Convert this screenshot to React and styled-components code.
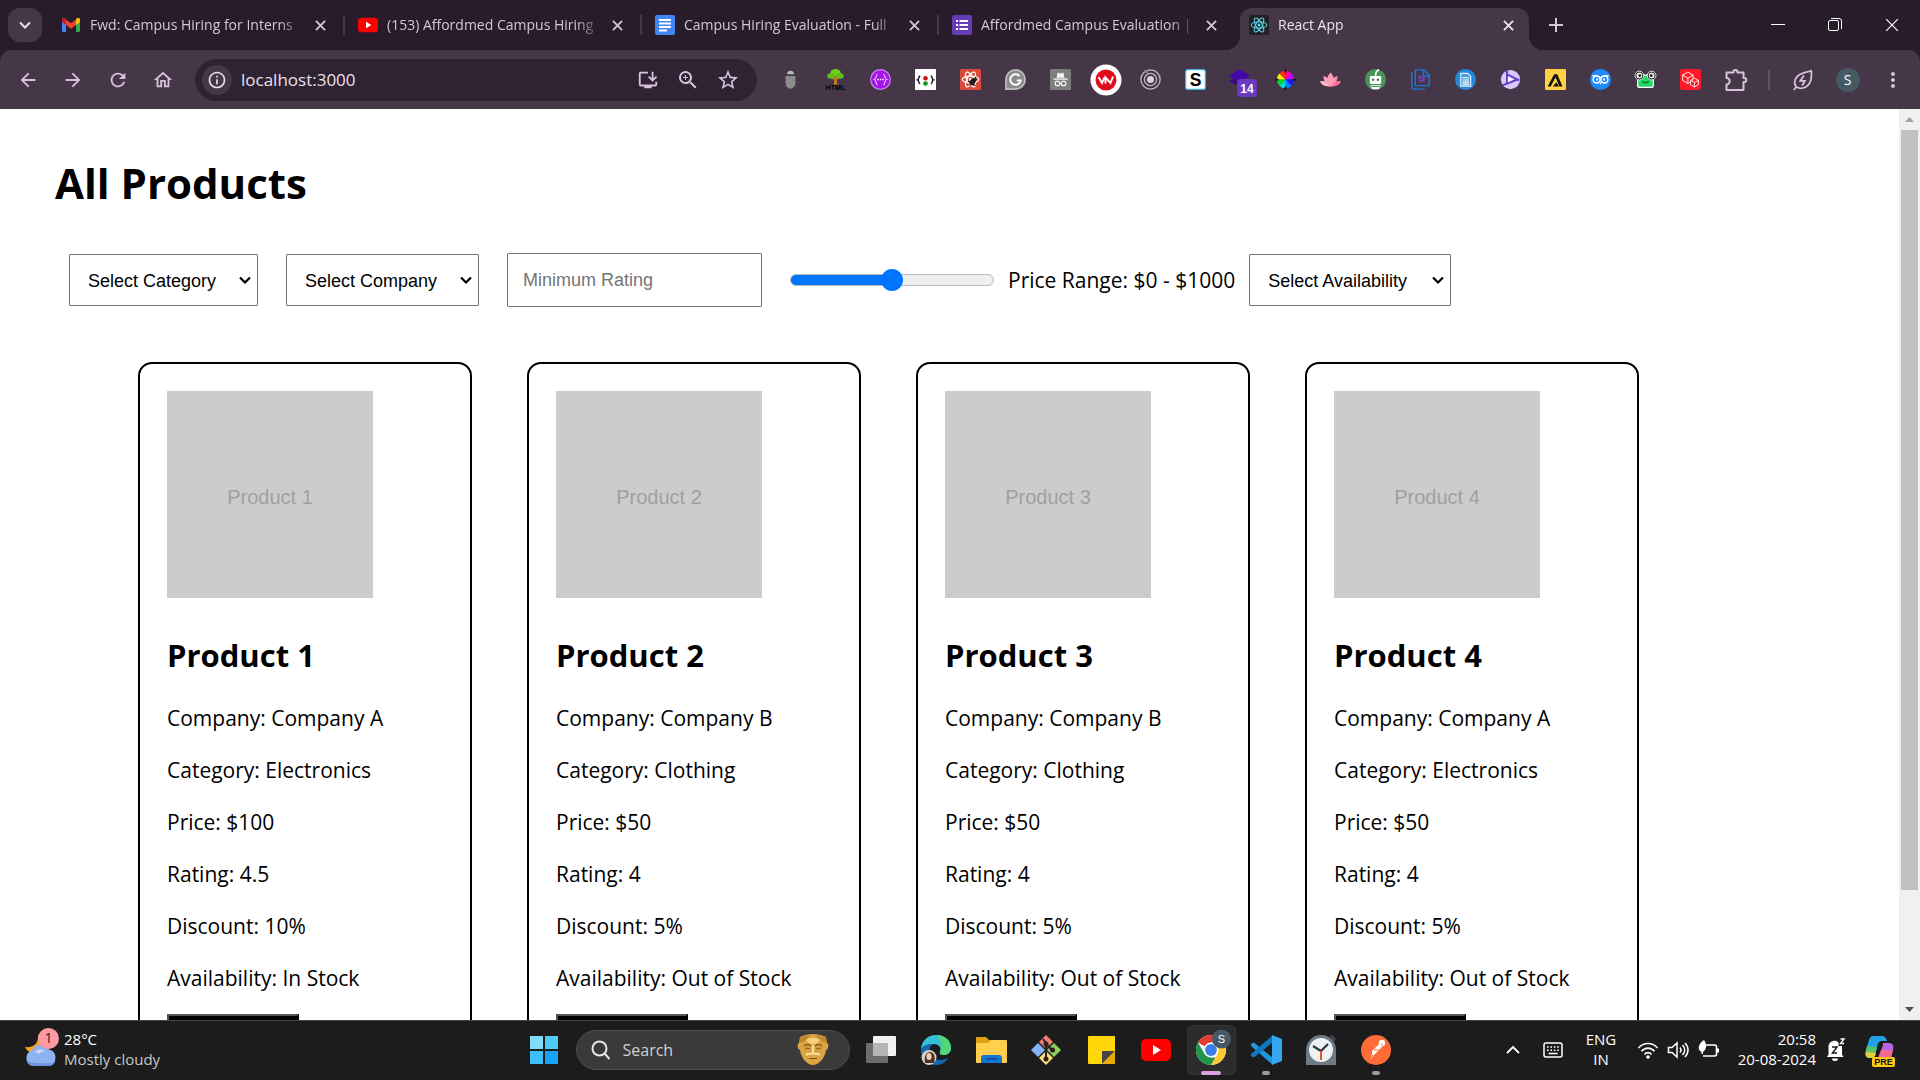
import React, { useState } from "react";
import styled, { createGlobalStyle, css } from "styled-components";
import {
  MdArrowBack,
  MdArrowForward,
  MdRefresh,
  MdOutlineHome,
  MdInfoOutline,
  MdInstallDesktop,
  MdZoomIn,
  MdStarBorder,
  MdMoreVert,
} from "react-icons/md";

const UI_FONT = `"Open Sans", "Noto Sans", sans-serif`;
const FORM_FONT = `"Liberation Sans", Arial, sans-serif`;

const GlobalStyle = createGlobalStyle`
  * { box-sizing: border-box; }
  body { margin: 0; font-family: ${UI_FONT}; background: #fff; color: #000; }
  button, input, select { font: inherit; }
  svg { display: block; flex: none; }
  h1, h2, p { margin: 0; }
`;

/* ---------- window shell ---------- */

const Desktop = styled.div`
  height: 100vh;
  display: flex;
  flex-direction: column;
  overflow: hidden;
`;

const PlainButton = styled.button`
  display: flex;
  align-items: center;
  justify-content: center;
  padding: 0;
  border: 0;
  background: none;
  color: inherit;
`;

/* ---------- tab strip ---------- */

const TabStrip = styled.header`
  display: flex;
  align-items: stretch;
  height: 50px;
  flex: none;
  background: #281c2b;
  color: #d9c3dc;
`;

const TabSearch = styled(PlainButton)`
  width: 34px;
  height: 34px;
  margin: 8px 6px 8px 8px;
  border-radius: 12px;
  background: #453748;
  color: #eadcec;
`;

const Tab = styled.div`
  flex: 0 1 297px;
  min-width: 0;
  padding: 8px 4px 0;
  position: relative;
  ${(p) =>
    p.$divided &&
    css`
      &::after {
        content: "";
        position: absolute;
        right: 0;
        top: 15px;
        width: 2px;
        height: 20px;
        background: #453748;
      }
    `}
`;

const TabBody = styled.div`
  display: flex;
  align-items: center;
  height: 42px;
  padding: 0 15px 8px 9px;
  border-radius: 12px 12px 0 0;
  position: relative;
  ${(p) =>
    p.$active &&
    css`
      background: #453748;
      color: #f0e2f2;
      &::before,
      &::after {
        content: "";
        position: absolute;
        bottom: 0;
        width: 14px;
        height: 14px;
      }
      &::before {
        left: -14px;
        background: radial-gradient(circle at 0 0, transparent 14px, #453748 14px);
      }
      &::after {
        right: -14px;
        background: radial-gradient(circle at 100% 0, transparent 14px, #453748 14px);
      }
    `}
`;

const TabTitle = styled.span`
  flex: 1;
  min-width: 0;
  margin: 0 15px 0 9px;
  font-size: 14px;
  line-height: 20px;
  white-space: nowrap;
  overflow: hidden;
  mask-image: linear-gradient(to right, #000 90%, rgba(0, 0, 0, 0.2));
`;

const NewTab = styled(PlainButton)`
  width: 46px;
`;

const WindowControls = styled.div`
  display: flex;
  margin-left: auto;
  color: #fff;
`;

const WindowButton = styled(PlainButton)`
  width: 57px;
`;

/* ---------- toolbar ---------- */

const ToolbarBack = styled.div`
  flex: none;
  background: #281c2b;
`;

const Toolbar = styled.nav`
  display: flex;
  align-items: center;
  height: 59px;
  padding: 0 5px;
  border-radius: 12px 12px 0 0;
  background: #453748;
  color: #d9c3dc;
`;

const Slot = styled(PlainButton)`
  width: 45px;
  height: 45px;
  flex: none;
`;

const Omnibox = styled.div`
  flex: 1;
  min-width: 0;
  display: flex;
  align-items: center;
  height: 42px;
  margin: 0 11px 0 10px;
  padding: 0 9px 0 7px;
  border-radius: 21px;
  background: #2f2233;
`;

const SiteInfo = styled(PlainButton)`
  width: 30px;
  height: 30px;
  border-radius: 50%;
  background: #453748;
  color: #eadcec;
`;

const Address = styled.input`
  flex: 1;
  min-width: 0;
  padding: 0 0 0 9px;
  border: 0;
  outline: 0;
  background: none;
  color: #ebe0ec;
  font-size: 17px;
  line-height: 24px;
`;

const OmniAction = styled(PlainButton)`
  width: 40px;
`;

const Extensions = styled.div`
  display: flex;
  flex: none;
`;

const ToolbarRule = styled.span`
  width: 2px;
  height: 20px;
  margin: 0 10px;
  background: #65506a;
`;

const Avatar = styled.span`
  display: grid;
  place-items: center;
  width: 24px;
  height: 24px;
  border-radius: 50%;
  background: #455a64;
  color: #fff;
  font-size: 14px;
`;

/* ---------- page ---------- */

const Viewport = styled.div`
  flex: 1;
  min-height: 0;
  display: flex;
  background: #fff;
`;

const Page = styled.main`
  flex: 1;
  min-width: 0;
  overflow: hidden;
  padding: 44px 55px 0;
  font-size: 21px;
`;

const PageTitle = styled.h1`
  font-size: 42px;
  line-height: 60px;
  font-weight: 700;
`;

const Filters = styled.form`
  display: flex;
  align-items: center;
  margin-top: 40px;
  padding: 0 14px;
`;

const SelectBox = styled.div`
  display: grid;
  align-items: center;
  flex: none;
  margin-right: ${(p) => (p.$last ? 0 : "28px")};
  & > * {
    grid-area: 1 / 1;
  }
  & > svg {
    justify-self: end;
    margin-right: 6px;
    pointer-events: none;
  }
`;

const Select = styled.select`
  appearance: none;
  width: ${(p) => p.$width}px;
  height: 52px;
  padding: 1px 18px 0;
  border: 1px solid #767676;
  border-radius: 1px;
  background: #fff;
  color: #000;
  font-family: ${FORM_FONT};
  font-size: 18px;
`;

const RatingInput = styled.input`
  width: 255px;
  height: 54px;
  padding: 0 15px;
  border: 1px solid #767676;
  border-radius: 1px;
  font-family: ${FORM_FONT};
  font-size: 18px;
  &::placeholder {
    color: #757575;
  }
`;

const PriceRange = styled.input`
  appearance: none;
  width: 204px;
  height: 22px;
  margin: 0 14px 0 28px;
  background: none;
  &::-webkit-slider-runnable-track {
    height: 12px;
    border: 1px solid #b9b9b9;
    border-radius: 6px;
    background: linear-gradient(to right, #0075ff 50%, #efefef 50%);
  }
  &::-webkit-slider-thumb {
    appearance: none;
    width: 22px;
    height: 22px;
    margin-top: -6px;
    border-radius: 50%;
    background: #0075ff;
  }
`;

const PriceLabel = styled.label`
  flex: none;
  margin-right: 14px;
  line-height: 30px;
`;

const ProductList = styled.section`
  display: flex;
  flex-wrap: wrap;
  gap: 55px;
  margin-top: 55px;
  padding-left: 83px;
`;

const Card = styled.article`
  width: 334px;
  padding: 27px;
  border: 2px solid #000;
  border-radius: 14px;
`;

const Picture = styled.div`
  display: grid;
  place-items: center;
  width: 206px;
  height: 207px;
  padding-top: 6px;
  background: #ccc;
  color: #a0a0a0;
  font-family: ${FORM_FONT};
  font-size: 20px;
`;

const CardTitle = styled.h2`
  margin: 35px 0 26px;
  font-size: 31px;
  line-height: 44px;
  font-weight: 700;
`;

const Fact = styled.p`
  line-height: 30px;
  margin-bottom: 22px;
`;

const CartButton = styled.button`
  width: 132px;
  height: 52px;
  margin-top: -1px;
  border: 2px outset #555;
  background: #000;
  color: #fff;
  font-size: 18px;
`;

const ScrollBar = styled.div`
  display: flex;
  flex-direction: column;
  align-items: center;
  flex: none;
  width: 21px;
  background: #f0f0f0;
`;

const ScrollArrow = styled(PlainButton)`
  height: 21px;
  color: ${(p) => (p.$off ? "#a3a3a3" : "#505050")};
`;

const ScrollTrack = styled.div`
  flex: 1;
  width: 17px;
`;

const ScrollThumb = styled.div`
  height: 87.5%;
  background: #c1c1c1;
`;

/* ---------- taskbar ---------- */

const Taskbar = styled.footer`
  display: grid;
  grid-template-columns: 1fr auto 1fr;
  flex: none;
  height: 60px;
  padding-bottom: 1px;
  border-top: 1px solid #454545;
  background: #1c1c1c;
  color: #fff;
  font-size: 15px;
  line-height: 20px;
`;

const Weather = styled(PlainButton)`
  justify-self: start;
  gap: 6px;
  padding-left: 24px;
  text-align: left;
`;

const WeatherArt = styled.span`
  position: relative;
`;

const Badge = styled.span`
  position: absolute;
  left: 14px;
  top: -5px;
  width: 21px;
  height: 21px;
  border-radius: 50%;
  background: #ff99a4;
  color: #222;
  font-size: 14px;
  line-height: 20px;
  text-align: center;
`;

const Lines = styled.span`
  display: flex;
  flex-direction: column;
  padding-bottom: 2px;
  text-align: ${(p) => p.$align || "left"};
`;

const Muted = styled.span`
  color: #c8c8c8;
`;

const Apps = styled.div`
  display: flex;
  align-items: center;
`;

const AppSlot = styled(PlainButton)`
  position: relative;
  width: 55px;
  height: 58px;
  &::before {
    content: "";
    position: absolute;
    inset: 4px 3px;
    border-radius: 5px;
    background: ${(p) => (p.$active ? "#2c2c2c" : "transparent")};
    border: 1px solid ${(p) => (p.$active ? "#343434" : "transparent")};
  }
  & > svg {
    position: relative;
  }
  &::after {
    content: "";
    position: absolute;
    bottom: 4px;
    left: calc(50% - ${(p) => (p.$active ? 10 : 4)}px);
    width: ${(p) => (p.$active ? 20 : 8)}px;
    height: 4px;
    border-radius: 2px;
    background: ${(p) => (p.$active ? "#dba1e4" : p.$running ? "#9a9a9a" : "transparent")};
  }
`;

const SearchPill = styled.label`
  display: flex;
  align-items: center;
  gap: 12px;
  width: 274px;
  height: 40px;
  margin: 0 4px;
  padding: 0 20px 0 14px;
  border: 1px solid #4c4c4c;
  border-radius: 20px;
  background: #3a3a3a;
`;

const SearchInput = styled.input`
  flex: 1;
  min-width: 0;
  padding: 0;
  border: 0;
  outline: 0;
  background: none;
  color: #fff;
  font-size: 16px;
  line-height: 22px;
  &::placeholder {
    color: #cfcfcf;
    opacity: 1;
  }
`;

const Tray = styled.div`
  display: flex;
  align-items: center;
  justify-content: flex-end;
  padding-right: 16px;
`;

const TrayButton = styled(PlainButton)`
  width: ${(p) => p.$width}px;
  height: 48px;
`;

const SystemGroup = styled(PlainButton)`
  margin-left: 4px;
  & > svg {
    margin: 0 4px;
  }
`;

const Clock = styled(PlainButton)`
  width: 93px;
  justify-content: flex-end;
`;

/* ---------- drawings ---------- */

const Svg = ({ size = 21, w, h, box = "0 0 24 24", children, ...rest }) => (
  <svg width={w || size} height={h || size} viewBox={box} fill="none" aria-hidden="true" {...rest}>
    {children}
  </svg>
);

const Chevron = ({ w = 14, thick = 2.2 }) => (
  <Svg w={w} h={w} box="0 0 14 14" stroke="currentColor" strokeWidth={thick}>
    <path d="M2 4.5l5 5 5-5" />
  </Svg>
);

const Cross = ({ size = 12, thick = 2 }) => (
  <Svg size={size} box="0 0 12 12" stroke="currentColor" strokeWidth={thick}>
    <path d="M1 1l10 10M11 1L1 11" />
  </Svg>
);

const GmailIcon = () => (
  <Svg w={20} h={20} box="0 0 20 20">
    <path d="M1 4.5v11A1.5 1.5 0 0 0 2.5 17H5V9z" fill="#4285f4" />
    <path d="M19 4.5v11a1.5 1.5 0 0 1-1.500 1.500H15V9z" fill="#34a853" />
    <path d="M15 4.500V10l4-3V4.800C19 2.800 17 2.200 15.600 3.300z" fill="#fbbc04" />
    <path d="M5 10V4.500l5 3.800 5-3.800V10l-5 3.800z" fill="#ea4335" />
    <path d="M1 4.800V7l4 3V4.500l-.6-1.200C3 2.200 1 2.800 1 4.800z" fill="#c5221f" />
  </Svg>
);

const YouTubeIcon = ({ w = 20, h = 20 }) => (
  <Svg w={w} h={h} box="0 0 30 30">
    <rect x="0" y="4" width="30" height="22" rx="5" fill="#f00" />
    <path d="M12 10l8 5-8 5z" fill="#fff" />
  </Svg>
);

const DocsIcon = () => (
  <Svg size={20} box="0 0 20 20">
    <rect width="20" height="20" rx="2" fill="#4285f4" />
    <path d="M4 5h12M4 8.500h12M4 12h12M4 15.500h8" stroke="#fff" strokeWidth="1.900" />
  </Svg>
);

const FormsIcon = () => (
  <Svg size={20} box="0 0 20 20">
    <rect width="20" height="20" rx="2" fill="#673ab7" />
    <path d="M7.500 6H16M7.500 10H16M7.500 14H16M4 6h2M4 10h2M4 14h2" stroke="#fff" strokeWidth="2" />
  </Svg>
);

const Orbits = ({ color, thick = 1.2 }) => (
  <g stroke={color} strokeWidth={thick}>
    <ellipse cx="12" cy="12" rx="9.500" ry="3.800" />
    <ellipse cx="12" cy="12" rx="9.500" ry="3.800" transform="rotate(60 12 12)" />
    <ellipse cx="12" cy="12" rx="9.500" ry="3.800" transform="rotate(120 12 12)" />
    <circle cx="12" cy="12" r="1.700" fill={color} stroke="none" />
  </g>
);

const ReactIcon = () => (
  <Svg size={20}>
    <rect width="24" height="24" rx="2" fill="#222" />
    <Orbits color="#61dafb" />
  </Svg>
);

const Glyph = (props) => <text textAnchor="middle" fontFamily={FORM_FONT} fontWeight="700" {...props} />;

const extensions = [
  ["Bug", <Svg>
    <path d="M4 9l4 2M20 9l-4 2M3 15h4M21 15h-4M5 20l3-2M19 20l-3-2" stroke="#625466" strokeWidth="1" />
    <path d="M8 6a4 4 0 0 1 8 0z" fill="#b9b9b9" />
    <path d="M6.500 8h11v8a5.500 6.500 0 0 1-11 0z" fill="#8d8d8d" />
  </Svg>],
  ["HTML tree", <Svg>
    <path d="M11 10h2.500l.5 8h-4z" fill="#c77a1c" />
    <path d="M12 13L7 9M12.500 12l4-3" stroke="#c77a1c" strokeWidth="1.500" />
    <ellipse cx="12" cy="4.500" rx="6" ry="4.500" fill="#72cf1c" />
    <ellipse cx="7" cy="8" rx="4.500" ry="3.200" fill="#62bd18" />
    <ellipse cx="17" cy="8" rx="4.500" ry="3.200" fill="#62bd18" />
    <path d="M11 8h2.500v5H11z" fill="#c77a1c" />
    <Glyph x="12" y="23.500" fontSize="8" fill="#000">HTML</Glyph>
  </Svg>],
  ["JSON", <Svg>
    <circle cx="12" cy="12" r="12" fill="#c48bea" />
    <circle cx="12" cy="12" r="10.600" fill="#a413e8" />
    <path d="M9 6c-3 0-1 5-4 6 3 1 1 6 4 6M15 6c3 0 1 5 4 6-3 1-1 6-4 6" stroke="#e2b8fa" strokeWidth="1.400" />
    <path d="M8.500 12h1.700M11.200 12h1.700M14 12h1.700" stroke="#fff" strokeWidth="1.700" />
  </Svg>],
  ["Traffic braces", <Svg>
    <rect width="24" height="24" rx="1" fill="#fff" />
    <circle cx="12" cy="10.500" r="2.600" fill="#d40f0f" />
    <circle cx="12" cy="16.500" r="2.600" fill="#108c1e" />
    <path d="M6 8c-2.500 0-.8 3.800-3 4.500 2.200.7.5 4.500 3 4.500M18 8c2.500 0 .8 3.800 3 4.500-2.200.7-.5 4.500-3 4.500" stroke="#111" strokeWidth="1.600" />
  </Svg>],
  ["React debug", <Svg>
    <rect width="24" height="24" rx="1.500" fill="#d94a3a" />
    <Orbits color="#fff" thick={1.400} />
    <ellipse cx="14.500" cy="14.500" rx="3" ry="4.500" transform="rotate(40 14.500 14.500)" fill="#1c1c1c" />
    <path d="M9 14l9 5M11 19l7-8M17 9l2 3" stroke="#1c1c1c" strokeWidth="1.300" />
  </Svg>],
  ["Grammar", <Svg>
    <path d="M0 24V12A12 12 0 1 1 12 24z" fill="#aaa" />
    <path d="M1.300 22.700V12A10.700 10.700 0 1 1 12 22.700z" fill="#8b8b8b" stroke="#d0d0d0" strokeWidth="1" />
    <path d="M16.500 8A6 6 0 1 0 18 13h-4.500" stroke="#fff" strokeWidth="2.200" />
  </Svg>],
  ["Incognito", <Svg>
    <rect width="24" height="24" rx="1" fill="#7d7d7d" />
    <path d="M7.500 10l1.200-6 3.300 1 3.300-1 1.200 6z" fill="#f4f4f4" />
    <path d="M4 11.500h16" stroke="#f4f4f4" strokeWidth="1.600" />
    <circle cx="8.500" cy="16.500" r="2.600" stroke="#f4f4f4" strokeWidth="1.400" />
    <circle cx="15.500" cy="16.500" r="2.600" stroke="#f4f4f4" strokeWidth="1.400" />
    <path d="M11 16.500h2" stroke="#f4f4f4" strokeWidth="1.400" />
  </Svg>],
  ["VN", <Svg size={32} box="0 0 32 32">
    <circle cx="16" cy="17" r="15" fill="#2c2230" />
    <circle cx="16" cy="16" r="15.500" fill="#fff" />
    <circle cx="16" cy="16" r="10.500" fill="#e20b1c" />
    <path d="M8.500 13l3.500 6 2.500-5.500M15.500 19.500v-6l5 5.500 2.500-6.500" stroke="#fff" strokeWidth="1.900" />
  </Svg>],
  ["Target", <Svg>
    <circle cx="12" cy="12" r="11" stroke="#bdb6bf" strokeWidth="1.500" />
    <circle cx="12" cy="12" r="7" stroke="#bdb6bf" strokeWidth="1.500" />
    <circle cx="12" cy="12" r="4" fill="#d7d1d8" />
    <path d="M4 1.500h5v3H5z" fill="#8b828e" />
  </Svg>],
  ["S", <Svg>
    <rect x=".7" y=".7" width="22.600" height="22.600" rx="2.500" fill="#fff" stroke="#3db4d8" strokeWidth="1.400" />
    <Glyph x="12" y="19" fontSize="20" fill="#000">S</Glyph>
  </Svg>],
  ["Layers", <Svg w={32} h={28} box="-4 0 32 28" overflow="visible">
    <path d="M10.500 3L21 10l-10.500 6L0 10z" fill="#4508a8" />
    <path d="M0 15l4-2.500 6.500 4V20z" fill="#37068a" />
    <rect x="8" y="13" width="20" height="18" rx="4" fill="#6a3ac0" />
    <Glyph x="18" y="26.500" fontSize="12" fill="#fff">14</Glyph>
  </Svg>],
  ["Color wheel", <Svg>
    <path d="M12 12V2A10 10 0 0 1 19 5z" fill="#ff00a8" />
    <path d="M12 12l7-7a10 10 0 0 1 3 7z" fill="#c400ff" />
    <path d="M12 12h10a10 10 0 0 1-3 7z" fill="#1a1aff" />
    <path d="M12 12l7 7a10 10 0 0 1-7 3z" fill="#0080ff" />
    <path d="M12 12v10a10 10 0 0 1-7-3z" fill="#00e0e0" />
    <path d="M12 12l-7 7a10 10 0 0 1-3-7z" fill="#00dd22" />
    <path d="M12 12H2a10 10 0 0 1 3-7z" fill="#f5ee00" />
    <path d="M12 12L5 5a10 10 0 0 1 7-3z" fill="#ff3300" />
    <path d="M12 0v4M12 20v4M0 12h4M20 12h4" stroke="#151515" strokeWidth="2" />
  </Svg>],
  ["Lotus", <Svg>
    <path d="M0 14c5-1 9 1 12 6-6 0-10-1-12-6z" fill="#ffb9c8" />
    <path d="M24 14c-5-1-9 1-12 6 6 0 10-1 12-6z" fill="#ff6c93" />
    <path d="M4 8c5 1 8 5 8 12-5-2-8-6-8-12z" fill="#ffa0b6" />
    <path d="M20 8c-5 1-8 5-8 12 5-2 8-6 8-12z" fill="#ff8fab" />
    <path d="M12 4c5 5 5 11 0 16-5-5-5-11 0-16z" fill="#ff9db4" />
  </Svg>],
  ["Robot", <Svg>
    <circle cx="12" cy="12" r="12" fill="#489457" />
    <path d="M12 8c0-4 1-6 4-7" stroke="#fff" strokeWidth="2" />
    <rect x="5.500" y="8" width="13" height="9" rx="1.500" fill="#fff" />
    <path d="M8 11h2.500v2.500H8zM13.500 11H16v2.500h-2.500z" fill="#32703f" />
    <path d="M6 18.500h12l-2 4.500H8z" fill="#fff" />
    <path d="M7 20h10" stroke="#489457" strokeWidth="1" />
  </Svg>],
  ["Copy pages", <Svg overflow="visible">
    <path d="M6 1h10l6 6v12H6zM15 1v7h7" stroke="#1976d2" strokeWidth="1.700" strokeLinejoin="round" />
    <path d="M2 4v16a3 3 0 0 0 3 3h12" stroke="#1976d2" strokeWidth="1.700" />
    <path d="M10 8l7 3-3 1 2.500 3M10 8l2 7 2-3" stroke="#7b3fc4" strokeWidth="1.300" />
  </Svg>],
  ["Document", <Svg>
    <circle cx="12" cy="12" r="12" fill="#2389d8" />
    <path d="M6.500 5h8l3.500 3.500V19.500H6.500z" fill="#4a9fe0" stroke="#e3f2fd" strokeWidth="1.300" />
    <path d="M8.500 10h7.500M8.500 12.500h7.500M8.500 15h7.500M8.500 17.300h7.500" stroke="#fff" strokeWidth="1.200" />
  </Svg>],
  ["Play shutter", <Svg>
    <circle cx="12" cy="12" r="11" fill="#d9c8ff" />
    <path d="M8 2v16M8 6l14 7M2 19l18-7" stroke="#6739c8" strokeWidth="2.200" />
    <path d="M9 9l6 3-6 3.500z" fill="#fff" />
  </Svg>],
  ["Lambda", <Svg>
    <rect width="24" height="24" rx="1.500" fill="#ffd043" />
    <path d="M3 20L10.500 6H14l6 14h-3.500L12 9.500 6.500 20z" fill="#111" />
    <path d="M9 20l4-5 3 5" fill="#111" />
  </Svg>],
  ["Owl", <Svg>
    <circle cx="12" cy="12" r="12" fill="#1d8bfb" />
    <path d="M2.500 7.500c4 0 7 0 9.500 2.500 2.500-2.500 5.500-2.500 9.500-2.500" stroke="#fff" strokeWidth="1.300" />
    <circle cx="7.500" cy="12" r="4" stroke="#fff" strokeWidth="1.600" />
    <circle cx="16.500" cy="12" r="4" stroke="#fff" strokeWidth="1.600" />
    <circle cx="8" cy="12" r="1.300" fill="#fff" />
    <circle cx="16" cy="12" r="1.300" fill="#fff" />
    <path d="M10.500 15l1.500 3 1.500-3" fill="#fff" />
  </Svg>],
  ["Frog", <Svg overflow="visible">
    <rect x="3" y="7" width="18" height="14" rx="2" fill="#24d968" stroke="#fff" strokeWidth="1.500" />
    <circle cx="5" cy="7.500" r="5" fill="#111" stroke="#fff" strokeWidth="1" />
    <circle cx="19" cy="7.500" r="5" fill="#111" stroke="#fff" strokeWidth="1" />
    <circle cx="5" cy="7.500" r="3.400" fill="#eee" />
    <circle cx="19" cy="7.500" r="3.400" fill="#eee" />
    <circle cx="5.500" cy="7.500" r="1.500" fill="#111" />
    <circle cx="18.500" cy="7.500" r="1.500" fill="#111" />
    <path d="M8.500 14c2 2.500 5 2.500 7 0" stroke="#106c31" strokeWidth="1.500" />
  </Svg>],
  ["Cubes", <Svg>
    <rect width="24" height="24" rx="2.500" fill="#fd1b2b" />
    <path d="M3 7l6-3.500L15 7v6l-6 3.500L3 13zM3 7l6 3.500L15 7M9 10.500v6" stroke="#fff" strokeWidth="1" />
    <path d="M12 13l4.500-2.500L21 13v5l-4.500 2.500L12 18zM12 13l4.500 2.500L21 13M16.500 15.500v5" fill="#fd1b2b" stroke="#fff" strokeWidth="1" />
  </Svg>],
  ["Extensions", <Svg size={24}>
    <path d="M2.500 4.500h7V4a2 2 0 0 1 4 0v.5h6V10h.8a2 2 0 0 1 0 4h-.8v8h-17v-5.500a3.200 3.200 0 0 0 0-6.400z" stroke="#d9c3dc" strokeWidth="2" strokeLinejoin="round" />
  </Svg>],
];

const LeafIcon = () => (
  <Svg size={22} stroke="#d9c3dc" strokeWidth="1.900">
    <path d="M21 2c1 9-1 18-11 19-5 .3-7.500-3-7-7C4 6 12 4 21 2zM5 19l-3 4" />
    <path d="M13 7l-4 6h5l-3 5" />
  </Svg>
);

const WeatherIcon = () => (
  <Svg w={34} h={34} box="0 0 34 34">
    <path d="M14 1c1 9-4 14-13 13 2 5 7 7 12 5s7-10 1-18z" fill="#f3a422" />
    <path d="M9 33a8 8 0 0 1-1-15.500 9.500 9.500 0 0 1 17-1A8.500 8.500 0 0 1 25 33z" fill="#8fb2f0" />
    <path d="M11 19c3-4 9-3 10 0-3-1-5 0-6 2-1-1-3-2-4-2z" fill="#c9d9fb" />
    <path d="M3 28c2 4 5 5 7 5h15c3 0 5-2 6-4-4 2-24 2-28-1z" fill="#6f93e2" />
  </Svg>
);

const WindowsIcon = () => (
  <Svg size={30} box="0 0 30 30">
    <path d="M1 1h13v13H1z" fill="#7fdcfb" />
    <path d="M16 1h13v13H16z" fill="#4fcdf8" />
    <path d="M1 16h13v13H1z" fill="#3cc0f7" />
    <path d="M16 16h13v13H16z" fill="#17a4f5" />
  </Svg>
);

const MaskIcon = () => (
  <Svg w={32} h={32} box="0 0 32 32">
    <path d="M3 3c8-4 18-4 26 0l1 6c2 0 2 6-1 7-1 8-7 15-13 15S4 24 3 16c-3-1-3-7-1-7z" fill="#d9a441" />
    <path d="M3 4c2-2 6-3 10-3-2 4-6 7-11 8zM29 4c-2-2-6-3-10-3 2 4 6 7 11 8z" fill="#c08a2c" />
    <path d="M9 6c4-3 10-3 14 0-2 3-5 4-7 4s-5-1-7-4z" fill="#f3d27a" />
    <path d="M7 12c2-1.500 5-1.500 7 0M18 12c2-1.500 5-1.500 7 0M12 24.500h8" stroke="#7d5415" strokeWidth="1.200" />
    <path d="M8 14.500h5M19 14.500h5" stroke="#9a6a1e" strokeWidth="1.500" />
    <path d="M16 11v8M9 21c2-2 12-2 14 0" stroke="#f9e5a6" strokeWidth="1.800" />
  </Svg>
);

const TaskViewIcon = () => (
  <Svg w={30} h={30} box="0 0 30 30">
    <rect x="7" y="1" width="23" height="20" rx="1" fill="#f1f1f1" />
    <rect x="0" y="8" width="22" height="20" rx="1" fill="#6d6d6d" />
    <path d="M7 8h15v13H7z" fill="#b5b5b5" />
  </Svg>
);

const EdgeIcon = () => (
  <Svg w={30} h={30} box="0 0 30 30">
    <path d="M0 15C0 6 7 0 15 0c9 0 15 6 15 13 0 4-3 7-7 7-3 0-5-1-4-3 2-5-2-8-6-8C6 9 1 12 0 15z" fill="#35c1d6" />
    <path d="M17 0c8 1 13 6 13 13 0 4-3 7-7 7-3 0-5-1-4-3 2-5 2-9-2-17z" fill="#52d673" />
    <path d="M0 15C1 11 6 9 12 9c-4 3-4 7-2 11 3 6 10 6 17 3-3 5-7 7-12 7C6 30 0 23 0 15z" fill="#1267b5" />
    <circle cx="8" cy="22.500" r="7.500" fill="#d9cfc8" />
    <path d="M4 28c-1-7 1-11 5-11s6 5 4 11z" fill="#4a312b" />
    <ellipse cx="8" cy="21.500" rx="2.600" ry="3.500" fill="#f0cdb9" />
  </Svg>
);

const FolderIcon = () => (
  <Svg w={31} h={30} box="0 0 31 30">
    <path d="M0 3a1 1 0 0 1 1-1h9l3 3h17v8H0z" fill="#dda011" />
    <path d="M0 8h12l3-3h15a1 1 0 0 1 1 1v21a1 1 0 0 1-1 1H1a1 1 0 0 1-1-1z" fill="#ffcf4d" />
    <path d="M5 28v-5a3 3 0 0 1 3-3h15a3 3 0 0 1 3 3v5z" fill="#1474cf" />
    <path d="M10 24h11" stroke="#0b4a94" strokeWidth="1.500" />
  </Svg>
);

const GitIcon = () => (
  <Svg w={30} h={30} box="0 0 30 30">
    <path d="M15 0l7 7-7 7-7-7z" fill="#f37b74" />
    <path d="M7 8l7 7-7 7-7-7z" fill="#82b3fb" />
    <path d="M23 8l7 7-7 7-7-7z" fill="#8bcf5c" />
    <path d="M15 16l7 7-7 7-7-7z" fill="#f8dd74" />
    <path d="M12 4l3 4v16M15 9l6 6" stroke="#2a1f1f" strokeWidth="2" />
    <circle cx="15" cy="9" r="2.500" fill="#2a1f1f" />
    <circle cx="15" cy="24" r="2.500" fill="#2a1f1f" />
    <circle cx="21.500" cy="15" r="2.500" fill="#2a1f1f" />
  </Svg>
);

const StickyIcon = () => (
  <Svg w={27} h={28} box="0 0 27 28">
    <rect width="27" height="28" rx="1" fill="#ffd60a" />
    <path d="M14 15h13L14 28z" fill="#454545" />
    <path d="M27 15v13H14z" fill="#e8ab09" />
  </Svg>
);

const ChromeIcon = () => (
  <Svg w={36} h={30} box="0 0 36 30" overflow="visible">
    <circle cx="18" cy="15" r="15" fill="#fff" />
    <path d="M18 15L5 7.500A15 15 0 0 1 31 7.500H18z" fill="#e33b2e" />
    <path d="M18 7.500h13A15 15 0 0 1 18 30l6.500-11.200z" fill="#fcc934" />
    <path d="M5 7.500l6.500 11.300L18 22.500h4.300L18 30A15 15 0 0 1 5 7.500z" fill="#1e9648" />
    <circle cx="18" cy="15" r="7.500" fill="#fff" />
    <circle cx="18" cy="15" r="5.900" fill="#3b7ded" />
    <circle cx="28.500" cy="4" r="9.500" fill="#455a64" />
    <Glyph x="28.500" y="8" fontSize="11" fontWeight="400" fill="#fff">S</Glyph>
  </Svg>
);

const VsCodeIcon = () => (
  <Svg w={31} h={30} box="0 0 31 30">
    <path d="M3 7.500L22 23v7L0 11V9z" fill="#2196df" />
    <path d="M3 22.500L22 7V0L0 19v2z" fill="#0f77bf" />
    <path d="M21 0l10 4v22l-10 4z" fill="#35a7f0" />
  </Svg>
);

const ClockAppIcon = () => (
  <Svg w={30} h={30} box="0 0 30 30">
    <path d="M23 2l3-2 4 4-2 3z" fill="#3c444c" />
    <path d="M0 30V15a15 15 0 0 1 30 0v15z" fill="#6d7a87" />
    <circle cx="15" cy="15" r="12" fill="#eef0f2" />
    <path d="M7 11l8 5 7-7" stroke="#303a44" strokeWidth="2.400" />
    <path d="M15 16v9" stroke="#e25a1c" strokeWidth="2" />
  </Svg>
);

const PostmanIcon = () => (
  <Svg w={30} h={30} box="0 0 30 30">
    <circle cx="15" cy="15" r="15" fill="#ff6c37" />
    <circle cx="21" cy="8" r="3.200" fill="#fff" />
    <path d="M11 16l7-7 3 3-7 7-5 5 2-5z" fill="#fff" />
    <path d="M8 24l4-4M13 15l6 0M20 9l2 1" stroke="#ff6c37" strokeWidth="1" />
  </Svg>
);

const KeyboardIcon = () => (
  <Svg w={20} h={16} box="0 0 20 16" stroke="#fff" strokeWidth="1.500">
    <rect x="1" y="1" width="18" height="14" rx="2" />
    <path d="M4 5h12M4 8.300h12" strokeDasharray="1.600 1.800" />
    <path d="M5.500 11.500h9" />
  </Svg>
);

const WifiIcon = () => (
  <Svg w={22} h={20} box="0 0 22 20" stroke="#fff" strokeWidth="1.700">
    <path d="M1.500 8c5-6 14-6 19 0M4.500 11.300c3.500-4.300 9.500-4.300 13 0M7.500 14.500c2-2.400 5-2.400 7 0" />
    <circle cx="11" cy="17" r="1.800" fill="#fff" stroke="none" />
  </Svg>
);

const VolumeIcon = () => (
  <Svg w={22} h={20} box="0 0 22 20" stroke="#fff" strokeWidth="1.500">
    <path d="M1.500 7.500h3.500l5-4.500v14l-5-4.500H1.500zM13 7.500c1.300 1.500 1.300 3.500 0 5M15.500 5c3 3 3 7 0 10M18 3c4 4 4 10 0 14" />
  </Svg>
);

const BatteryIcon = () => (
  <Svg w={22} h={20} box="0 0 22 20">
    <path d="M9 5h8.500a2 2 0 0 1 2 2v7a2 2 0 0 1-2 2H6" stroke="#fff" strokeWidth="1.600" />
    <path d="M20 8.500h2v4h-2z" fill="#fff" />
    <path d="M7 0c3 4 3 9-1 12v2H4.500v-2C0 10 1 4 7 0z" fill="#fff" />
  </Svg>
);

const BellIcon = () => (
  <Svg w={20} h={24} box="0 0 20 24">
    <path d="M2.500 16.500V9c0-6 7-8 10-4.500V8H16v8.500l1.500 2.500H1z" fill="#fff" />
    <path d="M6 9h5l-4.500 6H11" stroke="#1c1c1c" strokeWidth="1.500" />
    <path d="M14.500 1H18l-3.500 4.500H18" stroke="#fff" strokeWidth="1.400" />
    <path d="M6 20.500h6a3 2.500 0 0 1-6 0z" fill="#fff" />
  </Svg>
);

const CopilotIcon = () => (
  <Svg w={30} h={34} box="0 0 30 34" overflow="visible">
    <path d="M8 3h9c3 0 4 2 5 5h-5c-3 0-4 2-5 6l-2 8c-1 2-2 3-4 3H4c-4 0-4-4-3-8L4 7c1-3 2-4 4-4z" fill="#1fa0e8" />
    <path d="M2 13l10 1-2 8c-1 2-2 3-4 3-6 0-6-4-5-8z" fill="#5fc06a" />
    <path d="M1 19l10 1c-1 4-2 5-5 5-4 0-6-1-5-6z" fill="#e6cf35" />
    <path d="M18 10h6c4 0 5 3 4 7l-2 7H14l4-12z" fill="#b766ea" />
    <path d="M16 17h12l-2 8H13z" fill="#ef6a8e" />
    <rect x="7" y="24" width="23" height="10" rx="2" fill="#ffc814" />
    <Glyph x="18.500" y="32" fontSize="9" fill="#111">PRE</Glyph>
  </Svg>
);

/* ---------- data ---------- */

const tabs = [
  { title: "Fwd: Campus Hiring for Interns", icon: <GmailIcon />, divided: true },
  { title: "(153) Affordmed Campus Hiring", icon: <YouTubeIcon />, divided: true },
  { title: "Campus Hiring Evaluation - Full", icon: <DocsIcon />, divided: true },
  { title: "Affordmed Campus Evaluation |", icon: <FormsIcon /> },
  { title: "React App", icon: <ReactIcon />, active: true },
];

const products = [
  { name: "Product 1", company: "Company A", category: "Electronics", price: 100, rating: 4.5, discount: 10, stock: "In Stock" },
  { name: "Product 2", company: "Company B", category: "Clothing", price: 50, rating: 4, discount: 5, stock: "Out of Stock" },
  { name: "Product 3", company: "Company B", category: "Clothing", price: 50, rating: 4, discount: 5, stock: "Out of Stock" },
  { name: "Product 4", company: "Company A", category: "Electronics", price: 50, rating: 4, discount: 5, stock: "Out of Stock" },
];

const FilterSelect = ({ label, width, options, last }) => (
  <SelectBox $last={last}>
    <Select $width={width} aria-label={label} defaultValue="">
      <option value="">{label}</option>
      {options.map((o) => (
        <option key={o}>{o}</option>
      ))}
    </Select>
    <Chevron />
  </SelectBox>
);

const ProductCard = ({ product }) => (
  <Card>
    <Picture>{product.name}</Picture>
    <CardTitle>{product.name}</CardTitle>
    <Fact>Company: {product.company}</Fact>
    <Fact>Category: {product.category}</Fact>
    <Fact>Price: ${product.price}</Fact>
    <Fact>Rating: {product.rating}</Fact>
    <Fact>Discount: {product.discount}%</Fact>
    <Fact>Availability: {product.stock}</Fact>
    <CartButton type="button" aria-label={`Open ${product.name}`} />
  </Card>
);

export default function App() {
  const [price, setPrice] = useState(500);
  return (
    <Desktop>
      <GlobalStyle />
      <TabStrip>
        <TabSearch aria-label="Search tabs"><Chevron thick={2} /></TabSearch>
        {tabs.map((t) => (
          <Tab key={t.title} $divided={t.divided}>
            <TabBody $active={t.active}>
              {t.icon}
              <TabTitle>{t.title}</TabTitle>
              <PlainButton aria-label={`Close ${t.title}`}><Cross size={11} /></PlainButton>
            </TabBody>
          </Tab>
        ))}
        <NewTab aria-label="New tab">
          <Svg size={14} box="0 0 14 14" stroke="currentColor" strokeWidth="2"><path d="M7 0v14M0 7h14" /></Svg>
        </NewTab>
        <WindowControls>
          <WindowButton aria-label="Minimize">
            <Svg size={14} box="0 0 14 14" stroke="currentColor"><path d="M0 6.500h14" /></Svg>
          </WindowButton>
          <WindowButton aria-label="Restore">
            <Svg size={14} box="0 0 14 14" stroke="currentColor">
              <rect x=".5" y="2.500" width="10" height="10" rx="1.500" />
              <path d="M3 .5h8a2.500 2.500 0 0 1 2.500 2.500v8" />
            </Svg>
          </WindowButton>
          <WindowButton aria-label="Close window"><Cross size={14} thick={1} /></WindowButton>
        </WindowControls>
      </TabStrip>

      <ToolbarBack>
        <Toolbar>
          <Slot aria-label="Back"><MdArrowBack size={22} /></Slot>
          <Slot aria-label="Forward"><MdArrowForward size={22} /></Slot>
          <Slot aria-label="Reload"><MdRefresh size={22} /></Slot>
          <Slot aria-label="Home"><MdOutlineHome size={22} /></Slot>
          <Omnibox>
            <SiteInfo aria-label="Site information"><MdInfoOutline size={20} /></SiteInfo>
            <Address aria-label="Address" defaultValue="localhost:3000" />
            <OmniAction aria-label="Install app"><MdInstallDesktop size={22} /></OmniAction>
            <OmniAction aria-label="Zoom"><MdZoomIn size={24} /></OmniAction>
            <OmniAction aria-label="Bookmark"><MdStarBorder size={24} /></OmniAction>
          </Omnibox>
          <Extensions>
            {extensions.map(([name, icon]) => (
              <Slot key={name} aria-label={name}>{icon}</Slot>
            ))}
          </Extensions>
          <ToolbarRule />
          <Slot aria-label="Energy saver"><LeafIcon /></Slot>
          <Slot aria-label="Profile"><Avatar>S</Avatar></Slot>
          <Slot aria-label="Menu"><MdMoreVert size={24} /></Slot>
        </Toolbar>
      </ToolbarBack>

      <Viewport>
        <Page>
          <PageTitle>All Products</PageTitle>
          <Filters>
            <FilterSelect label="Select Category" width={189} options={["Electronics", "Clothing"]} />
            <FilterSelect label="Select Company" width={193} options={["Company A", "Company B"]} />
            <RatingInput type="text" placeholder="Minimum Rating" aria-label="Minimum Rating" />
            <PriceRange id="price" type="range" min="0" max="1000" value={price} onChange={(e) => setPrice(+e.target.value)} />
            <PriceLabel htmlFor="price">Price Range: $0 - $1000</PriceLabel>
            <FilterSelect label="Select Availability" width={202} options={["In Stock", "Out of Stock"]} last />
          </Filters>
          <ProductList>
            {products.map((p) => (
              <ProductCard key={p.name} product={p} />
            ))}
          </ProductList>
        </Page>
        <ScrollBar>
          <ScrollArrow $off aria-label="Scroll up">
            <Svg w={9} h={5} box="0 0 9 5"><path d="M0 5l4.500-5L9 5z" fill="currentColor" /></Svg>
          </ScrollArrow>
          <ScrollTrack><ScrollThumb /></ScrollTrack>
          <ScrollArrow aria-label="Scroll down">
            <Svg w={9} h={5} box="0 0 9 5"><path d="M0 0l4.500 5L9 0z" fill="currentColor" /></Svg>
          </ScrollArrow>
        </ScrollBar>
      </Viewport>

      <Taskbar>
        <Weather>
          <WeatherArt><WeatherIcon /><Badge>1</Badge></WeatherArt>
          <Lines><span>28°C</span><Muted>Mostly cloudy</Muted></Lines>
        </Weather>
        <Apps>
          <AppSlot aria-label="Start"><WindowsIcon /></AppSlot>
          <SearchPill>
            <Svg size={20} box="0 0 20 20" stroke="#e6e6e6" strokeWidth="2">
              <circle cx="8.500" cy="8.500" r="7" /><path d="M13.500 13.500l5 5.500" />
            </Svg>
            <SearchInput placeholder="Search" aria-label="Search" />
            <MaskIcon />
          </SearchPill>
          <AppSlot aria-label="Task view"><TaskViewIcon /></AppSlot>
          <AppSlot aria-label="Edge"><EdgeIcon /></AppSlot>
          <AppSlot aria-label="File Explorer"><FolderIcon /></AppSlot>
          <AppSlot aria-label="Git"><GitIcon /></AppSlot>
          <AppSlot aria-label="Sticky Notes"><StickyIcon /></AppSlot>
          <AppSlot aria-label="YouTube"><YouTubeIcon w={30} h={30} /></AppSlot>
          <AppSlot $active aria-label="Chrome"><ChromeIcon /></AppSlot>
          <AppSlot $running aria-label="Visual Studio Code"><VsCodeIcon /></AppSlot>
          <AppSlot aria-label="Clock"><ClockAppIcon /></AppSlot>
          <AppSlot $running aria-label="Postman"><PostmanIcon /></AppSlot>
        </Apps>
        <Tray>
          <TrayButton $width={40} aria-label="Hidden icons">
            <Svg size={14} box="0 0 14 14" stroke="#fff" strokeWidth="1.800"><path d="M1 10l6-6 6 6" /></Svg>
          </TrayButton>
          <TrayButton $width={40} aria-label="Touch keyboard"><KeyboardIcon /></TrayButton>
          <TrayButton $width={56}><Lines $align="center"><span>ENG</span><span>IN</span></Lines></TrayButton>
          <SystemGroup aria-label="Quick settings"><WifiIcon /><VolumeIcon /><BatteryIcon /></SystemGroup>
          <Clock><Lines $align="right"><span>20:58</span><span>20-08-2024</span></Lines></Clock>
          <TrayButton $width={40} aria-label="Notifications"><BellIcon /></TrayButton>
          <TrayButton $width={48} aria-label="Copilot"><CopilotIcon /></TrayButton>
        </Tray>
      </Taskbar>
    </Desktop>
  );
}
